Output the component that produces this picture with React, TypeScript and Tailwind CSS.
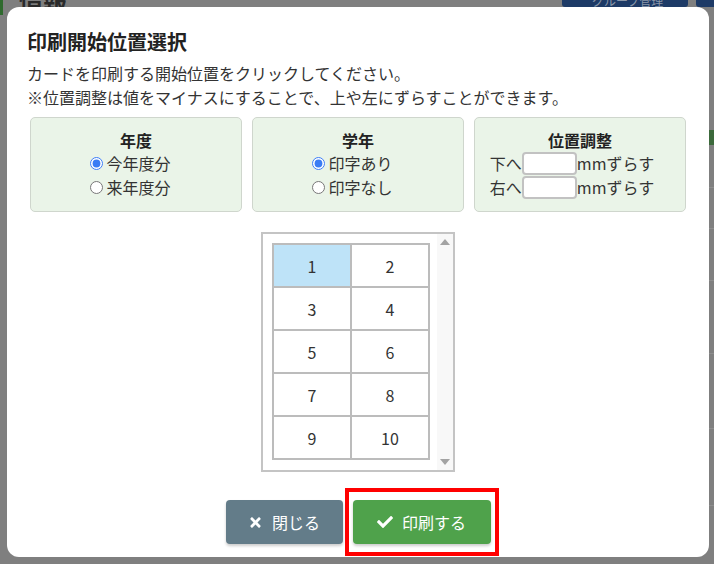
import { FaCheck, FaTimes } from "react-icons/fa";

const font = { fontFamily: '"Noto Sans CJK JP", "Noto Sans", sans-serif' };

function Panel({ title, children }: { title: string; children: React.ReactNode }) {
  return (
    <div className="w-[212px] h-[95px] rounded-[5px] border border-[#cfd6cd] bg-[#eaf4e8] flex flex-col items-center pt-[12px] text-[#333]">
      <div className="text-[16px] leading-[21px] font-bold text-[#222]">{title}</div>
      {children}
    </div>
  );
}

function RadioRow({ name, label, checked }: { name: string; label: string; checked?: boolean }) {
  return (
    <label className="flex items-center h-[24px] text-[16px] leading-[24px] pr-[11px]">
      <input type="radio" name={name} defaultChecked={checked} className="w-[13px] h-[13px] m-0 mr-[3px] accent-[#3b7cf4]" />
      <span>{label}</span>
    </label>
  );
}

function ShiftRow({ dir }: { dir: string }) {
  return (
    <div className="flex items-center h-[24px] text-[16px] leading-[24px] pr-[16px]">
      <span>{dir}</span>
      <input type="text" className="w-[55px] h-[23px] border-2 border-[#c2c2c2] rounded-[4px] bg-white outline-none" />
      <span>mmずらす</span>
    </div>
  );
}

const cells = [1, 2, 3, 4, 5, 6, 7, 8, 9, 10];

export default function App() {
  return (
    <div className="relative w-[714px] h-[564px] overflow-hidden bg-[#7f7f7f] p-[7px]" style={font}>
      {/* dimmed page behind the modal */}
      <div className="absolute left-0 top-0 w-[3px] h-[15px] bg-[#2f6a2e]" />
      <div className="absolute left-[19px] top-[-17px] text-[24px] font-bold text-[#2a2a2a]">情報</div>
      <div className="absolute left-[562px] top-[-6px] w-[126px] h-[13px] rounded-[3px] bg-[#1d3a66] text-[12px] leading-[13px] text-[#8a96a8] pl-[30px]">グループ管理</div>
      <div className="absolute left-[696px] top-[-6px] w-[30px] h-[13px] rounded-[3px] bg-[#1d3a66]" />
      <div className="absolute left-[709px] top-[130px] w-[5px] h-[15px] bg-[#3c693b]" />
      <div className="absolute left-[709px] top-[187px] w-[5px] h-px bg-[#8e8e8e]" />
      <div className="absolute left-[709px] top-[228px] w-[5px] h-px bg-[#8e8e8e]" />
      <div className="absolute left-[709px] top-[280px] w-[5px] h-px bg-[#8e8e8e]" />
      <div className="absolute left-[709px] top-[353px] w-[5px] h-px bg-[#8e8e8e]" />
      <div className="absolute left-[709px] top-[428px] w-[5px] h-px bg-[#8e8e8e]" />
      <div className="absolute left-[709px] top-[505px] w-[5px] h-px bg-[#8e8e8e]" />

      {/* modal */}
      <div className="relative w-[702px] h-[550px] bg-white rounded-[12px] px-[20px] pt-[21px] flex flex-col">
        <h2 className="text-[20px] leading-[28px] font-bold text-[#222]">印刷開始位置選択</h2>
        <p className="mt-[5px] text-[16px] leading-[24px] text-[#333]">
          カードを印刷する開始位置をクリックしてください。
          <br />
          ※位置調整は値をマイナスにすることで、上や左にずらすことができます。
        </p>

        <div className="mt-[8px] ml-[3px] flex gap-[10px]">
          <Panel title="年度">
            <RadioRow name="year" label="今年度分" checked />
            <RadioRow name="year" label="来年度分" />
          </Panel>
          <Panel title="学年">
            <RadioRow name="grade" label="印字あり" checked />
            <RadioRow name="grade" label="印字なし" />
          </Panel>
          <Panel title="位置調整">
            <ShiftRow dir="下へ" />
            <ShiftRow dir="右へ" />
          </Panel>
        </div>

        <div className="mt-[20px] self-center w-[194px] h-[240px] border-2 border-[#c4c4c4] flex">
          <div className="flex-1 pl-[9px] pt-[9px]">
            <table className="border-collapse text-[16px] text-[#333]">
              <tbody>
                {[0, 1, 2, 3, 4].map((r) => (
                  <tr key={r}>
                    {cells.slice(r * 2, r * 2 + 2).map((n) => (
                      <td
                        key={n}
                        className={
                          "border-2 border-[#bcbcbc] w-[78px] h-[43px] p-0 text-center " +
                          (n === 1 ? "bg-[#bee3f8]" : "bg-white")
                        }
                      >
                        {n}
                      </td>
                    ))}
                  </tr>
                ))}
              </tbody>
            </table>
          </div>
          {/* scrollbar */}
          <div className="w-[16px] bg-[#f8f8f8] flex flex-col items-center justify-between py-[5px]">
            <div className="w-0 h-0 border-l-[5px] border-r-[5px] border-b-[6px] border-l-transparent border-r-transparent border-b-[#a3a3a3]" />
            <div className="w-0 h-0 border-l-[5px] border-r-[5px] border-t-[6px] border-l-transparent border-r-transparent border-t-[#a3a3a3]" />
          </div>
        </div>

        <div className="mt-[28px] flex justify-center gap-[10px]">
          <button className="w-[117px] h-[44px] rounded-[4px] bg-[#637c89] text-white text-[16px] flex items-center justify-center gap-[9px] shadow-[0_2px_3px_rgba(0,0,0,0.2)]">
            <FaTimes size={15} />
            <span>閉じる</span>
          </button>
          <div className="relative">
            <button className="w-[138px] h-[44px] rounded-[4px] bg-[#4fa24b] text-white text-[16px] flex items-center justify-center gap-[9px] shadow-[0_2px_3px_rgba(0,0,0,0.2)]">
              <FaCheck size={16} />
              <span>印刷する</span>
            </button>
            <div className="absolute left-[-8px] top-[-12px] w-[154px] h-[68px] border-[4px] border-[#ff0000]" />
          </div>
        </div>
      </div>
    </div>
  );
}
